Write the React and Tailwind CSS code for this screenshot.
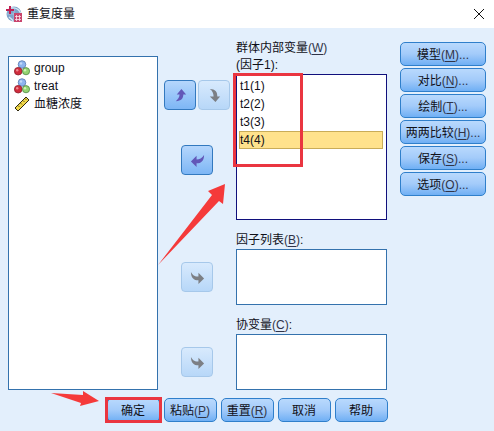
import React from 'react';

const variables = [
  { name: 'group', kind: 'nominal' },
  { name: 'treat', kind: 'nominal' },
  { name: '血糖浓度', kind: 'scale' },
];

const factors = ['t1(1)', 't2(2)', 't3(3)', 't4(4)'];

const options = [
  { label: '模型', hotkey: 'M' },
  { label: '对比', hotkey: 'N' },
  { label: '绘制', hotkey: 'T' },
  { label: '两两比较', hotkey: 'H' },
  { label: '保存', hotkey: 'S' },
  { label: '选项', hotkey: 'O' },
];

const actions = [
  { label: '确定', marked: true },
  { label: '粘贴', hotkey: 'P' },
  { label: '重置', hotkey: 'R' },
  { label: '取消' },
  { label: '帮助' },
];

const arrowPaths = {
  up: 'M9 1 L14 7 H11 C11 11 9 14 3 14 C5 12 7 10 7 7 H4 Z',
  down: 'M9 15 L3 9 H7 C7 6 6 3 3 1 C9 1 11 4 11 9 H14 Z',
  left: 'M1 9 L7 3 V7 C10 7 13 5 15 2 C15 8 12 11 7 11 V15 Z',
  right: 'M15 9 L9 3 V7 C6 7 3 6 1 2 C1 8 4 11 9 11 V15 Z',
};

const AppIcon = () => (
  <svg className="w-4 h-4 shrink-0" viewBox="0 0 16 16" aria-hidden="true">
    <circle cx="8" cy="8" r="7.5" fill="#7fa3c9" />
    <path d="M3 11 C6 13 7 15 7 15 M5 2 C11 1 14 5 15 8" stroke="#d6e8f5" strokeWidth="1.4" fill="none" />
    <path d="M8 1 V15 M1 8 H15" stroke="#b4cfe6" strokeWidth="0.7" fill="none" />
    <path d="M4 0 V8 M0 4 H8" stroke="#c21f52" strokeWidth="2" />
    <rect x="8" y="7" width="8" height="9" fill="#c9456d" />
    <path d="M9 10.5 H15 M9 13.5 H15 M10.5 9 V15 M13.5 9 V15" stroke="#fbe3ec" strokeWidth="0.8" />
  </svg>
);

const NominalIcon = () => (
  <svg className="w-4 h-4 shrink-0" viewBox="0 0 16 16" aria-hidden="true">
    <circle cx="8" cy="4.5" r="3.8" fill="#8db5ef" stroke="#5878b0" strokeWidth="0.8" />
    <circle cx="4.2" cy="11.2" r="3.8" fill="#d02c3c" stroke="#8e1e2c" strokeWidth="0.8" />
    <circle cx="12" cy="11.2" r="3.6" fill="#94d472" stroke="#4f8744" strokeWidth="0.8" />
    <circle cx="7" cy="3.5" r="1.2" fill="#c4daf9" />
    <circle cx="3.2" cy="10.2" r="1.2" fill="#f08a8f" />
    <circle cx="11" cy="10.2" r="1.2" fill="#d0f3b8" />
  </svg>
);

const ScaleIcon = () => (
  <svg className="w-4 h-4 shrink-0" viewBox="0 0 16 16" aria-hidden="true">
    <path d="M1 12 L12 1 L15 4 L4 15 Z" fill="#f1d849" stroke="#30290f" />
    <path d="M4 9.5 L5.5 11 M6.5 7 L8 8.5 M9 4.5 L10.5 6 M11 2.5 L12.5 4" stroke="#30290f" strokeWidth="0.7" />
  </svg>
);

const Hotkey = ({ letter }) => (
  <span className="text-[#303448]">
    (<span className="underline underline-offset-2">{letter}</span>)
  </span>
);

const PushButton = ({ label, hotkey, dots }) => (
  <button
    type="button"
    className="block w-full h-6 rounded-[5px] border border-[#2f7fcb] bg-linear-to-b from-[#b9d9fd] via-[#a3cbfa] to-[#6faff4] leading-6 whitespace-nowrap"
  >
    {label}
    {hotkey && <Hotkey letter={hotkey} />}
    {dots && <span className="text-[#303448]">...</span>}
  </button>
);

const ArrowButton = ({ direction, label, disabled }) => (
  <button
    type="button"
    aria-label={label}
    disabled={disabled}
    className={`flex items-center justify-center w-8 h-[30px] shrink-0 rounded border bg-linear-to-b ${
      disabled
        ? 'border-[#a6c8ea] from-[#d8eafd] to-[#b7d7f8] text-[#7c7f84]'
        : 'border-[#3379bf] from-[#b5d6fc] to-[#7db6f5] text-[#6257b8]'
    }`}
  >
    <svg className="w-[15px] h-[15px]" viewBox="0 0 16 16" fill="currentColor" aria-hidden="true">
      <path d={arrowPaths[direction]} />
    </svg>
  </button>
);

const EmptyField = ({ id, label, hotkey, arrowLabel }) => (
  <div className="grid grid-cols-[78px_1fr]">
    <div className="flex items-center justify-center pt-[17px]">
      <ArrowButton direction="right" label={arrowLabel} disabled />
    </div>
    <div>
      <div id={id} className="leading-[17px]">
        {label}
        <Hotkey letter={hotkey} />:
      </div>
      <ul role="listbox" aria-labelledby={id} className="h-14 bg-white border border-[#3472ad]" />
    </div>
  </div>
);

const App = () => (
  <main className="bg-[#e3effc] text-xs text-[#101018] font-['Liberation_Sans','Noto_Sans_CJK_SC',sans-serif]">
    {/* Title bar */}
    <header className="flex items-center h-7 bg-white pl-[6px] pr-2">
      <AppIcon />
      <h1 className="ml-[5px] flex-1">重复度量</h1>
      <button type="button" aria-label="关闭" className="p-px">
        <svg className="w-3 h-3" viewBox="0 0 12 12" stroke="#111" fill="none" aria-hidden="true">
          <path d="M1 1 L11 11 M11 1 L1 11" />
        </svg>
      </button>
    </header>

    <div className="px-2 pt-3 pb-[9px]">
      <div className="grid grid-cols-[150fr_242fr_86px]">
        {/* Source variables */}
        <ul role="listbox" aria-label="变量" className="mt-4 bg-white border border-[#3472ad] p-[2px] pl-[5px]">
          {variables.map((item) => (
            <li key={item.name} role="option" aria-selected="false" className="flex items-center h-[18px] gap-1">
              {item.kind === 'nominal' ? <NominalIcon /> : <ScaleIcon />}
              {item.name}
            </li>
          ))}
        </ul>

        {/* Targets */}
        <div className="flex flex-col gap-3 mr-[13px]">
          <div className="grid grid-cols-[78px_1fr]">
            <div className="relative flex flex-col items-center gap-[35px] pt-10">
              <div className="flex gap-[2px]">
                <ArrowButton direction="up" label="上移" />
                <ArrowButton direction="down" label="下移" disabled />
              </div>
              <ArrowButton direction="left" label="移回变量列表" />
              <svg className="absolute left-0 top-[143px] w-[70px] h-[84px] pointer-events-none" viewBox="158 183 70 84" aria-hidden="true">
                <path d="M225 184 L208 191 L212 195 L158 265 L219 201 L223 204 Z" fill="#f53a3a" />
              </svg>
            </div>
            <div>
              <div id="within" className="leading-[17px]">
                群体内部变量
                <Hotkey letter="W" />
                <br />
                (因子1):
              </div>
              <div className="relative">
                <ul role="listbox" aria-labelledby="within" className="h-[146px] bg-white border border-[#10107c] p-[2px] pr-[3px]">
                  {factors.map((factor) => (
                    <li
                      key={factor}
                      role="option"
                      aria-selected={factor === 't4(4)'}
                      className={`h-[18px] leading-4 border ${
                        factor === 't4(4)' ? 'bg-[#ffe28c] border-[#c9ac58]' : 'border-transparent'
                      }`}
                    >
                      {factor}
                    </li>
                  ))}
                </ul>
                <div className="absolute -left-[3px] -top-px w-[70px] h-[94px] border-3 border-[#ea3540] pointer-events-none" />
              </div>
            </div>
          </div>
          <EmptyField id="between" label="因子列表" hotkey="B" arrowLabel="移入因子列表" />
          <EmptyField id="covariates" label="协变量" hotkey="C" arrowLabel="移入协变量" />
        </div>

        <div className="flex flex-col gap-[2px] pt-[2px]">
          {options.map((item) => (
            <PushButton key={item.hotkey} label={item.label} hotkey={item.hotkey} dots />
          ))}
        </div>
      </div>

      {/* Dialog actions */}
      <div className="flex justify-center gap-1 mt-2">
        {actions.map((item) => (
          <div key={item.label} className="relative w-[53px]">
            <PushButton label={item.label} hotkey={item.hotkey} />
            {item.marked && (
              <>
                <div className="absolute -inset-x-[2px] -inset-y-px border-3 border-[#ea3540] pointer-events-none" />
                <svg className="absolute right-[61px] -top-2 w-[48px] h-4 pointer-events-none" viewBox="50 390 48 16" aria-hidden="true">
                  <path d="M50 393 L82 395 L82 391 L98 401 L79 406 L80 403 Z" fill="#f53a3a" />
                </svg>
              </>
            )}
          </div>
        ))}
      </div>
    </div>
  </main>
);

export default App;
